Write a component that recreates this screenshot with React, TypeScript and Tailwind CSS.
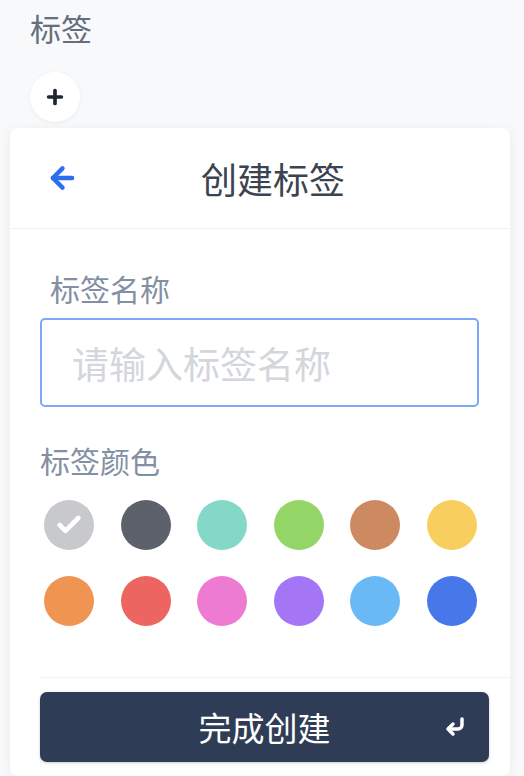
import { ArrowLeft, Check, Plus } from 'lucide-react';

const colors = [
  ['#c8c9cd', '#5c616c', '#83d8c8', '#93d566', '#cd8a61', '#f8cf5f'],
  ['#f09452', '#ed6560', '#ee7bd2', '#a476f6', '#6ab9f7', '#4877ea'],
];

function EnterIcon() {
  return (
    <svg width="24" height="24" viewBox="0 0 24 24" fill="none" stroke="white" strokeWidth="3.5" strokeLinecap="round" strokeLinejoin="round">
      <path d="M19 4v6a4 4 0 0 1-4 4H6" />
      <path d="M10 9l-5 5 5 5" />
    </svg>
  );
}

export default function App() {
  return (
    <div
      className="w-[524px] h-[776px] overflow-hidden bg-[#f8f9fb]"
      style={{ fontFamily: '"Noto Sans CJK SC", "Noto Sans", sans-serif' }}
    >
      <div className="pl-[30px] pt-[8px] text-[31px] leading-[40px] text-[#656e7c]">标签</div>

      <div className="ml-[30px] mt-[24px] w-[50px] h-[50px] rounded-full bg-white shadow-[0_1px_4px_rgba(0,0,0,0.06)] flex items-center justify-center">
        <Plus size={22} strokeWidth={4} className="text-[#1f2735]" />
      </div>

      <div className="ml-[10px] mt-[6px] w-[500px] rounded-[8px] bg-white shadow-[0_2px_12px_rgba(0,0,0,0.06)]">
        {/* header */}
        <div className="h-[101px] flex items-center border-b border-[#f0f1f3]">
          <div className="ml-[36px] w-[33px] flex items-center">
            <ArrowLeft size={34} strokeWidth={3.2} className="text-[#2b6ff0]" />
          </div>
          <div className="flex-1 mr-[43px] text-center text-[36px] leading-[44px] text-[#3c4350]">创建标签</div>
        </div>

        {/* body */}
        <div className="pl-[30px] pr-[21px] pt-[39px] pb-[14px]">
          <div className="pl-[10px] text-[30px] leading-[40px] text-[#8390a3]">标签名称</div>
          <div className="mt-[10px] w-[439px] h-[89px] rounded-[5px] border-2 border-[#7ea8f5] flex items-center">
            <input
              placeholder="请输入标签名称"
              className="w-full h-full bg-transparent pl-[30px] text-[37px] text-[#3c4350] outline-none placeholder:text-[#d3d6db]"
              style={{ fontFamily: '"Noto Sans CJK SC", "Noto Sans", sans-serif' }}
            />
          </div>

          <div className="mt-[33px] text-[30px] leading-[40px] text-[#8390a3]">标签颜色</div>

          <div className="mt-[20px] ml-[4px] w-[433px] flex flex-col gap-[26px]">
            {colors.map((row, r) => (
              <div key={r} className="flex justify-between">
                {row.map((c, i) => (
                  <div
                    key={c}
                    className="w-[50px] h-[50px] rounded-full flex items-center justify-center"
                    style={{ backgroundColor: c }}
                  >
                    {r === 0 && i === 0 ? <Check size={28} strokeWidth={4} className="text-white" /> : null}
                  </div>
                ))}
              </div>
            ))}
          </div>

          <div className="mt-[51px] -mr-[21px] h-px bg-[#f1f2f4]" />

          <button className="relative mt-[14px] w-[449px] h-[70px] rounded-[7px] bg-[#2f3c56] shadow-[0_1px_3px_rgba(0,0,0,0.2)] text-white text-[33px] leading-[70px] flex items-center justify-center">
            完成创建
            <span className="absolute right-[22px] top-[23px]">
              <EnterIcon />
            </span>
          </button>
        </div>
      </div>
    </div>
  );
}
